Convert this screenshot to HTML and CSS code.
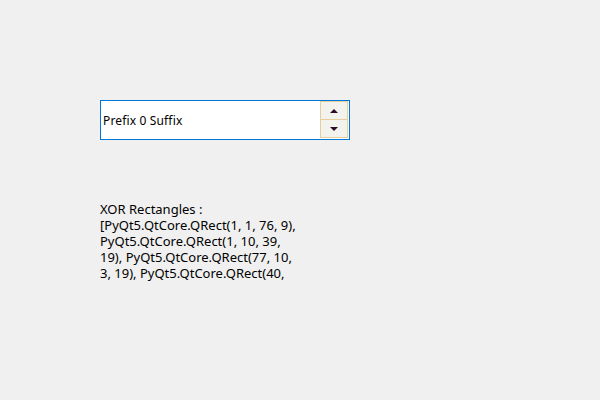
FILE: index.html
```html
<!DOCTYPE html>
<html>
<head>
<meta charset="utf-8">
<link rel="stylesheet" href="styles.css">
</head>
<body>
<div class="window">
  <div class="spin">
    <div class="spin-text">Prefix 0 Suffix</div>
    <div class="spin-buttons">
      <div class="spin-btn up"><span class="arrow-up"></span></div>
      <div class="spin-btn down"><span class="arrow-down"></span></div>
    </div>
  </div>
  <div class="label">XOR Rectangles :
[PyQt5.QtCore.QRect(1, 1, 76, 9), PyQt5.QtCore.QRect(1, 10, 39, 19), PyQt5.QtCore.QRect(77, 10, 3, 19), PyQt5.QtCore.QRect(40,</div>
</div>
</body>
</html>
```
FILE: styles.css
```css
html, body {
  margin: 0;
  padding: 0;
  background: #f0f0f0;
}
.window {
  width: 600px;
  height: 400px;
  padding: 100px 0 0 100px;
  box-sizing: border-box;
  font-family: "Noto Sans", sans-serif;
  font-size: 12px;
  color: #000;
}
.spin {
  width: 250px;
  height: 40px;
  box-sizing: border-box;
  border: 1px solid #0078d7;
  background: #fff;
  display: flex;
  align-items: stretch;
}
.spin-text {
  flex: 1;
  display: flex;
  align-items: center;
  padding-left: 2px;
  padding-top: 1px;
  letter-spacing: 0.15px;
}
.spin-buttons {
  width: 28px;
  display: flex;
  flex-direction: column;
  padding: 0 1px 1px 0;
}
.spin-btn {
  flex: 1;
  border: 1px solid #e6cf9c;
  background: #f3f3ee;
  display: flex;
  align-items: center;
  justify-content: center;
}
.spin-btn.up { border-bottom: none; }
.arrow-up {
  width: 0; height: 0;
  border-left: 4px solid transparent;
  border-right: 4px solid transparent;
  border-bottom: 4px solid #2a0a2a;
}
.arrow-down {
  width: 0; height: 0;
  border-left: 4px solid transparent;
  border-right: 4px solid transparent;
  border-top: 4px solid #2a0a2a;
}
.label {
  margin-top: 60px;
  width: 198px;
  font-size: 13px;
  line-height: 16px;
  padding-top: 1px;
  white-space: pre-line;
}
```
